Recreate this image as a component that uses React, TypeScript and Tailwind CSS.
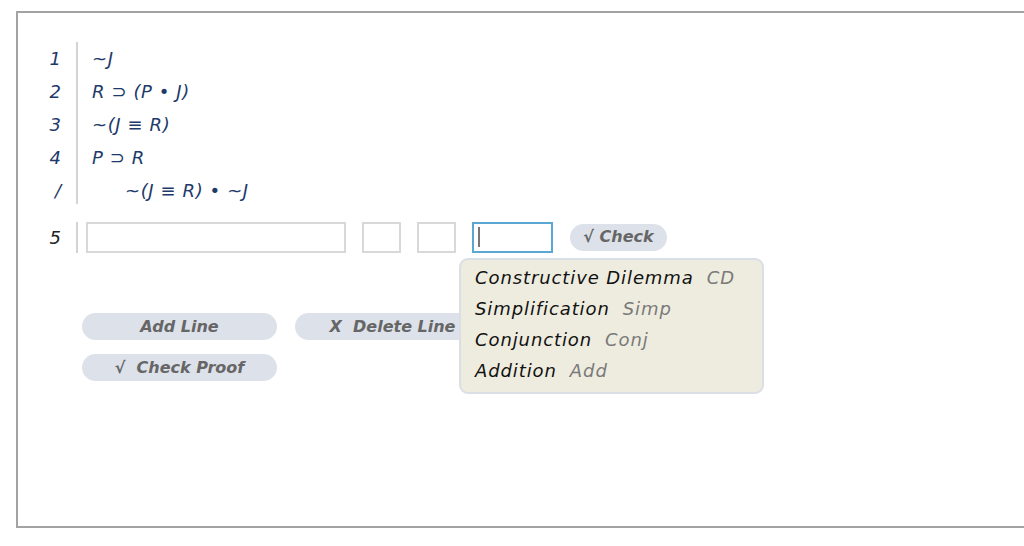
import React from "react";

const font = { fontFamily: '"DejaVu Sans", Verdana, sans-serif' };

const premises = ["~J", "R ⊃ (P • J)", "~(J ≡ R)", "P ⊃ R"];

export default function App() {
  return (
    <div className="w-[1024px] h-[546px] overflow-hidden bg-white relative" style={font}>
      <div className="ml-[16px] mt-[11px] h-[517px] w-[1100px] border-2 border-r-0 border-[#a3a3a3] relative">
        <div className="pt-[29px] flex">
          <div className="w-[58px] flex flex-col items-end pr-[15px] text-[#1d3a6b] italic text-[18px]">
            {["1", "2", "3", "4", "/"].map((n) => (
              <div key={n} className="h-[33px] leading-[33px]">{n}</div>
            ))}
          </div>
          <div className="border-l-2 border-[#d4d4d4] pl-[14px] text-[#1d3a6b] italic text-[18px] tracking-[0.6px] h-[162px]">
            {premises.map((p) => (
              <div key={p} className="h-[33px] leading-[33px] whitespace-pre">{p}</div>
            ))}
            <div className="h-[33px] leading-[33px] pl-[33px] whitespace-pre">~(J ≡ R) • ~J</div>
          </div>
        </div>
        <div className="mt-[14px] flex items-center h-[32px]">
          <div className="w-[58px] flex justify-end pr-[15px] italic text-[18px] text-[#222]">5</div>
          <div className="border-l-2 border-[#d4d4d4] h-[31px] pl-[8px] flex items-center">
            <div className="w-[260px] h-[31px] border-2 border-[#d8d8d8]" />
            <div className="ml-[16px] w-[39px] h-[31px] border-2 border-[#d8d8d8]" />
            <div className="ml-[16px] w-[39px] h-[31px] border-2 border-[#d8d8d8]" />
            <div className="ml-[16px] w-[81px] h-[31px] border-2 border-[#5aa7d4] flex items-center pl-[4px]">
              <div className="w-[2px] h-[20px] bg-[#777]" />
            </div>
            <div className="ml-[17px] w-[97px] h-[27px] rounded-full bg-[#dde2ea] text-[#666] font-bold italic text-[16px] flex items-center justify-center">
              √ Check
            </div>
          </div>
        </div>
        <div className="ml-[64px] mt-[60px] flex flex-col gap-[14px]">
          <div className="flex gap-[18px]">
            <div className="w-[195px] h-[27px] rounded-full bg-[#dde2ea] text-[#666] font-bold italic text-[16px] flex items-center justify-center">
              Add Line
            </div>
            <div className="w-[195px] h-[27px] rounded-full bg-[#dde2ea] text-[#666] font-bold italic text-[16px] flex items-center justify-center">
              X&nbsp; Delete Line
            </div>
          </div>
          <div className="w-[195px] h-[27px] rounded-full bg-[#dde2ea] text-[#666] font-bold italic text-[16px] flex items-center justify-center">
            √&nbsp; Check Proof
          </div>
        </div>
      </div>
      <div className="absolute left-[459px] top-[258px] w-[305px] h-[136px] rounded-[9px] border-2 border-[#d9dfe4] bg-[#eeecdf] pl-[14px] pt-[2px] italic text-[18px] tracking-[0.9px]">
        {[
          ["Constructive Dilemma", "CD"],
          ["Simplification", "Simp"],
          ["Conjunction", "Conj"],
          ["Addition", "Add"],
        ].map(([a, b]) => (
          <div key={a} className="h-[31px] leading-[31px] whitespace-pre">
            <span className="text-[#111]">{a}</span>
            <span className="text-[#7a7a7a] ml-[13px]">{b}</span>
          </div>
        ))}
      </div>
    </div>
  );
}
